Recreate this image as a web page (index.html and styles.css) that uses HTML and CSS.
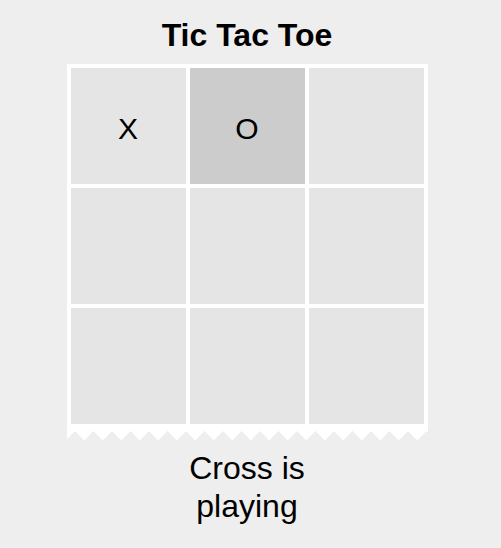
FILE: index.html
```html
<!DOCTYPE html>
<html lang="en">
<head>
    <meta charset="UTF-8">
    <meta name="viewport" content="width=device-width, initial-scale=1.0">
    <title>Tic Tac Toe</title>
    <link rel="stylesheet" href="styles.css">
</head>
<body>
    <div class="game">
        <h1>Tic Tac Toe</h1>
        <div class="board">
            <div class="cell">X</div>
            <div class="cell selected">O</div>
            <div class="cell"></div>
            <div class="cell"></div>
            <div class="cell"></div>
            <div class="cell"></div>
            <div class="cell"></div>
            <div class="cell"></div>
            <div class="cell"></div>
        </div>
        <div class="edge"></div>
        <p class="status">Cross is playing</p>
    </div>
</body>
</html>
```
FILE: styles.css
```css
body {
    font-family: "Liberation Sans", Arial, sans-serif;
    background-color: #eeeeee;
    color: #000;
    margin: 0;
}
.game {
    width: 494px;
    text-align: center;
}
h1 {
    font-size: 32px;
    font-weight: bold;
    margin: 17px 0 10px;
}
.board {
    display: grid;
    grid-template-columns: repeat(3, 115px);
    grid-auto-rows: 116px;
    gap: 4px;
    width: max-content;
    margin: 0 auto;
    padding: 4px 4px 7px;
    background: #fff;
}
.cell {
    display: flex;
    justify-content: center;
    align-items: center;
    padding-top: 6px;
    box-sizing: border-box;
    background: #e5e5e5;
    font-size: 30px;
}
.cell.selected {
    background: #cccccc;
}
.edge {
    width: 361px;
    height: 9px;
    margin: 0 auto;
    background: conic-gradient(from 135deg at 50% 0, transparent 90deg, #fff 0) -1.25px 0 / 18.5px 9px repeat-x;
}
.status {
    width: 200px;
    margin: 9px auto 0;
    font-size: 32px;
    line-height: 38px;
}
```
